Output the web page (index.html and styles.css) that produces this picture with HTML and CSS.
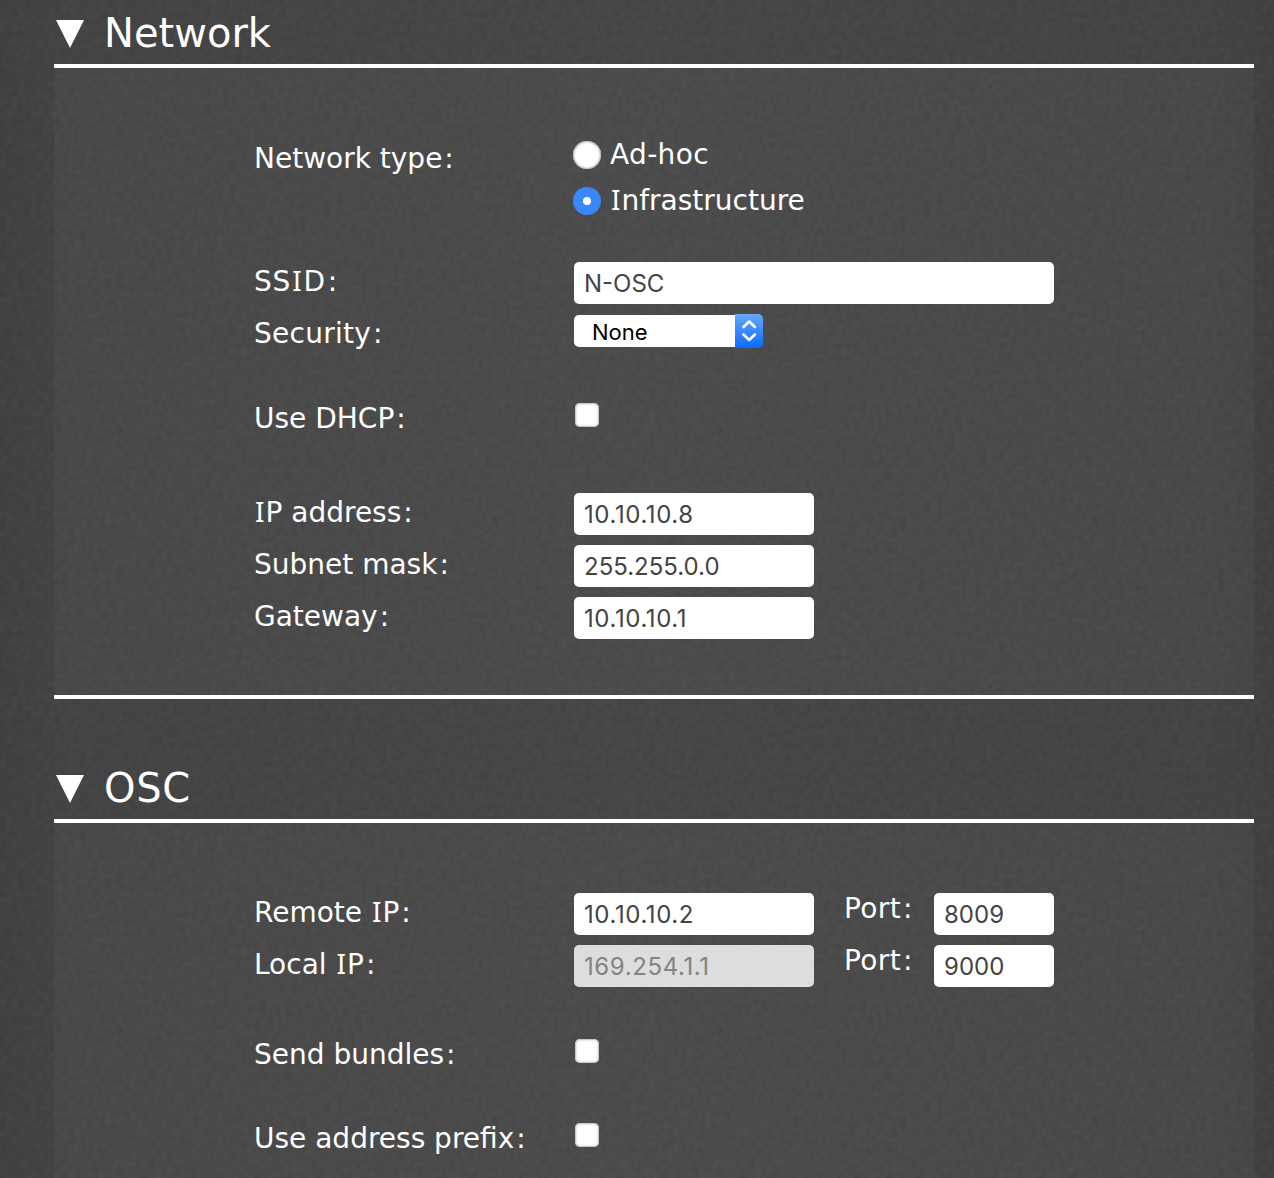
FILE: index.html
```html
<!DOCTYPE html>
<html lang="en">
<head>
<meta charset="utf-8">
<title>Settings</title>
<link rel="stylesheet" href="styles.css">
</head>
<body>
<main class="page">
  <section class="section">
    <h2 class="heading"><svg class="arrow" viewBox="0 0 28 28"><path d="M0 0H28L14 28Z"/></svg><span class="title-net">Network</span></h2>
    <div class="panel panel-network">
      <div class="row row-type">
        <span class="label label-type">Network type<span class="colon">:</span></span>
        <div class="radios">
          <label class="choice"><span class="radio"></span><span class="t-adhoc">Ad-hoc</span></label>
          <label class="choice"><span class="radio radio-on"></span><span class="t-infra"><span class="cap-i">I</span>nfrastructure</span></label>
        </div>
      </div>
      <div class="row">
        <span class="label label-ssid">SS<span class="cap-i">I</span>D<span class="colon">:</span></span>
        <input class="field field-wide" value="N-OSC">
      </div>
      <div class="row row-security">
        <span class="label label-security">Security<span class="colon">:</span></span>
        <div class="select"><span class="select-value">None</span><span class="select-cap"><svg class="chevrons" viewBox="0 0 28 34"><path d="M8.5 13L14.2 7.5L19.9 13M8.5 20.5L14.2 26L19.9 20.5"/></svg></span></div>
      </div>
      <div class="row row-dhcp">
        <span class="label">Use DHCP<span class="colon">:</span></span>
        <span class="check"></span>
      </div>
      <div class="row">
        <span class="label"><span class="cap-i">I</span>P address<span class="colon">:</span></span>
        <input class="field field-loose" value="10.10.10.8">
      </div>
      <div class="row">
        <span class="label">Subnet mask<span class="colon">:</span></span>
        <input class="field" value="255.255.0.0">
      </div>
      <div class="row">
        <span class="label">Gateway<span class="colon">:</span></span>
        <input class="field field-loose" value="10.10.10.1">
      </div>
    </div>
  </section>
  <section class="section">
    <h2 class="heading"><svg class="arrow" viewBox="0 0 28 28"><path d="M0 0H28L14 28Z"/></svg><span class="title-osc">OSC</span></h2>
    <div class="panel panel-osc">
      <div class="row">
        <span class="label">Remote <span class="cap-i">I</span>P<span class="colon">:</span></span>
        <input class="field field-loose" value="10.10.10.2">
        <span class="port-label">Port<span class="colon">:</span></span>
        <input class="field field-port" value="8009">
      </div>
      <div class="row row-local">
        <span class="label">Local <span class="cap-i">I</span>P<span class="colon">:</span></span>
        <input class="field field-loose" value="169.254.1.1" disabled>
        <span class="port-label">Port<span class="colon">:</span></span>
        <input class="field field-port" value="9000">
      </div>
      <div class="row row-bundles">
        <span class="label">Send bundles<span class="colon">:</span></span>
        <span class="check"></span>
      </div>
      <div class="row">
        <span class="label">Use address prefix<span class="colon">:</span></span>
        <span class="check"></span>
      </div>
    </div>
  </section>
</main>
</body>
</html>
```
FILE: styles.css
```css
* { box-sizing: border-box; }
body {
  margin: 0;
  height: 1178px;
  color: #fff;
  font: 28px/34px "DejaVu Sans", sans-serif;
  background:
    url("data:image/svg+xml,%3Csvg xmlns='http://www.w3.org/2000/svg' width='300' height='300'%3E%3Cfilter id='n'%3E%3CfeTurbulence type='fractalNoise' baseFrequency='.16' numOctaves='3' stitchTiles='stitch'/%3E%3CfeColorMatrix values='0 0 0 0 1 0 0 0 0 1 0 0 0 0 1 .06 0 0 0 0'/%3E%3C/filter%3E%3Crect width='300' height='300' filter='url(%23n)'/%3E%3C/svg%3E"),
    linear-gradient(90deg, #3b3b3b, #3e3e3e 70px, #414141 640px, #3e3e3e 1204px, #3b3b3b);
}
.page { width: 1200px; margin-left: 54px; }
.heading {
  display: flex;
  align-items: flex-start;
  gap: 20px;
  height: 68px;
  margin: 0;
  padding: 10px 0 0 2px;
  border-bottom: 4px solid #fff;
  font-size: 40px;
  font-weight: 400;
  line-height: 46px;
}
.title-osc { letter-spacing: .7px; }
.arrow { width: 28px; height: 28px; margin-top: 10px; fill: #fff; }
.panel { padding-left: 200px; background: rgba(255, 255, 255, .028); }
.panel-network { height: 631px; padding-top: 73px; border-bottom: 4px solid #fff; margin-bottom: 56px; }
.panel-osc { height: 355px; padding-top: 70px; }
.row { display: flex; align-items: flex-start; height: 52px; }
.row-type { height: 121px; }
.row-security { height: 85px; }
.row-dhcp { height: 94px; }
.row-local { height: 90px; }
.row-bundles { height: 84px; }
.label { flex: 0 0 320px; margin-top: 3px; white-space: nowrap; }
.label-type { margin-top: 1px; }
.label-ssid { letter-spacing: .8px; }
.label-security { letter-spacing: .25px; }
.colon { padding-left: 2px; }
.cap-i { font-family: "Noto Sans", sans-serif; line-height: 1; padding: 0 1px; }
.radios { margin: -3px 0 0 -1px; }
.choice { display: flex; gap: 9px; height: 46px; }
.t-adhoc { letter-spacing: .35px; }
.radio {
  width: 28px;
  height: 28px;
  margin-top: 3px;
  border-radius: 50%;
  background: #fff;
  box-shadow: inset 0 0 2px 1px #aaa;
}
.radio-on { background: radial-gradient(circle, #fff 3.7px, #3a87fb 4.5px); box-shadow: inset 0 0 1px #2e77e8; }
.field {
  width: 240px;
  height: 42px;
  margin: 0;
  padding: 1px 10px 0;
  border: 0;
  border-radius: 5px;
  background: #fff;
  color: #444;
  font: 24px "Inter", sans-serif;
}
.field:disabled { background: #ddd; color: #838383; }
.field-loose { letter-spacing: .6px; }
.field-wide { width: 480px; }
.field-port { width: 120px; }
.port-label { width: 120px; margin-top: -1px; padding-left: 30px; letter-spacing: .4px; }
.select { display: flex; align-items: center; width: 189px; height: 34px; }
.select-value {
  width: 161px;
  height: 32px;
  padding-left: 18px;
  border-radius: 5px 0 0 5px;
  background: #fff;
  color: #000;
  font: 22px/34px "Inter", sans-serif;
}
.select-cap { width: 28px; height: 34px; border-radius: 0 5px 5px 0; background: linear-gradient(#69a8fb, #086bff); }
.chevrons { display: block; width: 28px; height: 34px; fill: none; stroke: #fff; stroke-width: 2.6; stroke-linecap: round; stroke-linejoin: round; }
.check {
  width: 24px;
  height: 24px;
  margin: 4px 0 0 1px;
  border-radius: 5px;
  background: #fff;
  box-shadow: inset 0 0 2px 1px #b5b5b5;
}
```
